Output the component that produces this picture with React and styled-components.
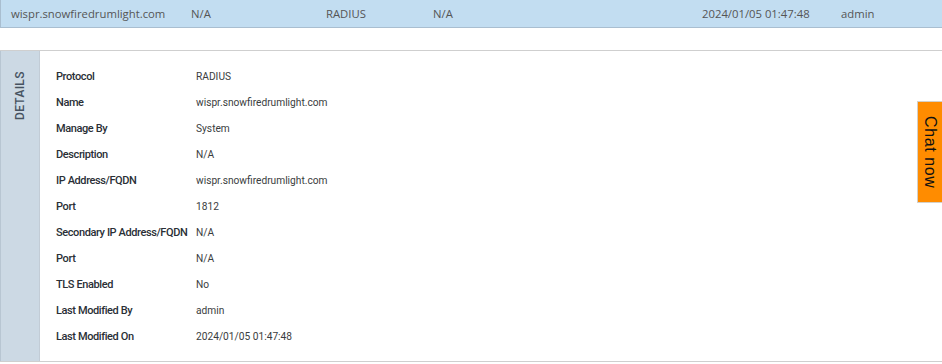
import React from "react";
import styled, { createGlobalStyle } from "styled-components";

const Global = createGlobalStyle`
  html, body { margin: 0; padding: 0; background: #fff; }
  body { font-family: Roboto, "Noto Sans", sans-serif; }
  * { box-sizing: border-box; }
`;

const Page = styled.div`
  width: 942px;
  height: 364px;
  position: relative;
  overflow: hidden;
`;

const TopRow = styled.div`
  display: flex;
  align-items: center;
  height: 28px;
  padding-left: 10px;
  background: #c2ddf1;
  border-bottom: 1px solid #a9bed0;
  border-left: 1px solid #a9bed0;
  font-family: "Open Sans", "Noto Sans", sans-serif;
  font-size: 11.3px;
  color: #555;
`;

const Cell = styled.div`
  width: ${(p) => p.$w}px;
  flex: none;
  white-space: nowrap;
`;

const Spacer = styled.div`
  height: 22px;
`;

const Panel = styled.div`
  display: flex;
  border-top: 1px solid #cfcfcf;
  border-bottom: 1px solid #cfcfcf;
  height: 312px;
`;

const SideTab = styled.div`
  width: 40px;
  flex: none;
  background: #ccd9e4;
  border-left: 1px solid #b8c6d2;
  border-right: 1px solid #c2ccd6;
  display: flex;
  justify-content: center;
  padding-top: 21px;
`;

const SideLabel = styled.div`
  writing-mode: vertical-rl;
  transform: rotate(180deg);
  font-size: 12px;
  letter-spacing: 0.3px;
  color: #465260;
  font-weight: 500;
  height: 48px;
  text-align: center;
`;

const Details = styled.div`
  flex: 1;
  padding: 12px 0 12px 16px;
`;

const Row = styled.div`
  display: flex;
  align-items: center;
  height: 26px;
`;

const Label = styled.div`
  width: 140px;
  flex: none;
  font-size: 11px;
  font-weight: 500;
  letter-spacing: -0.4px;
  color: #2a2f36;
  white-space: nowrap;
`;

const Value = styled.div`
  font-size: 10.2px;
  color: #3a3d40;
  white-space: nowrap;
`;

const Chat = styled.div`
  position: absolute;
  right: 0;
  top: 101px;
  width: 25px;
  height: 102px;
  background: #ff8c00;
  border: 1px solid #d4d0c8;
  border-right: none;
  display: flex;
  align-items: center;
  justify-content: center;
`;

const ChatText = styled.span`
  writing-mode: vertical-rl;
  font-family: "Liberation Sans", Arial, sans-serif;
  font-size: 16px;
  color: #111;
  letter-spacing: 0.6px;
`;

const top = [
  ["wispr.snowfiredrumlight.com", 180],
  ["N/A", 135],
  ["RADIUS", 107],
  ["N/A", 269],
  ["2024/01/05 01:47:48", 139],
  ["admin", 80],
];

const rows = [
  ["Protocol", "RADIUS"],
  ["Name", "wispr.snowfiredrumlight.com"],
  ["Manage By", "System"],
  ["Description", "N/A"],
  ["IP Address/FQDN", "wispr.snowfiredrumlight.com"],
  ["Port", "1812"],
  ["Secondary IP Address/FQDN", "N/A"],
  ["Port", "N/A"],
  ["TLS Enabled", "No"],
  ["Last Modified By", "admin"],
  ["Last Modified On", "2024/01/05 01:47:48"],
];

export default function App() {
  return (
    <Page>
      <Global />
      <TopRow>
        {top.map(([t, w], i) => (
          <Cell key={i} $w={w}>{t}</Cell>
        ))}
      </TopRow>
      <Spacer />
      <Panel>
        <SideTab>
          <SideLabel>DETAILS</SideLabel>
        </SideTab>
        <Details>
          {rows.map(([l, v], i) => (
            <Row key={i}>
              <Label>{l}</Label>
              <Value>{v}</Value>
            </Row>
          ))}
        </Details>
      </Panel>
      <Chat>
        <ChatText>Chat now</ChatText>
      </Chat>
    </Page>
  );
}
